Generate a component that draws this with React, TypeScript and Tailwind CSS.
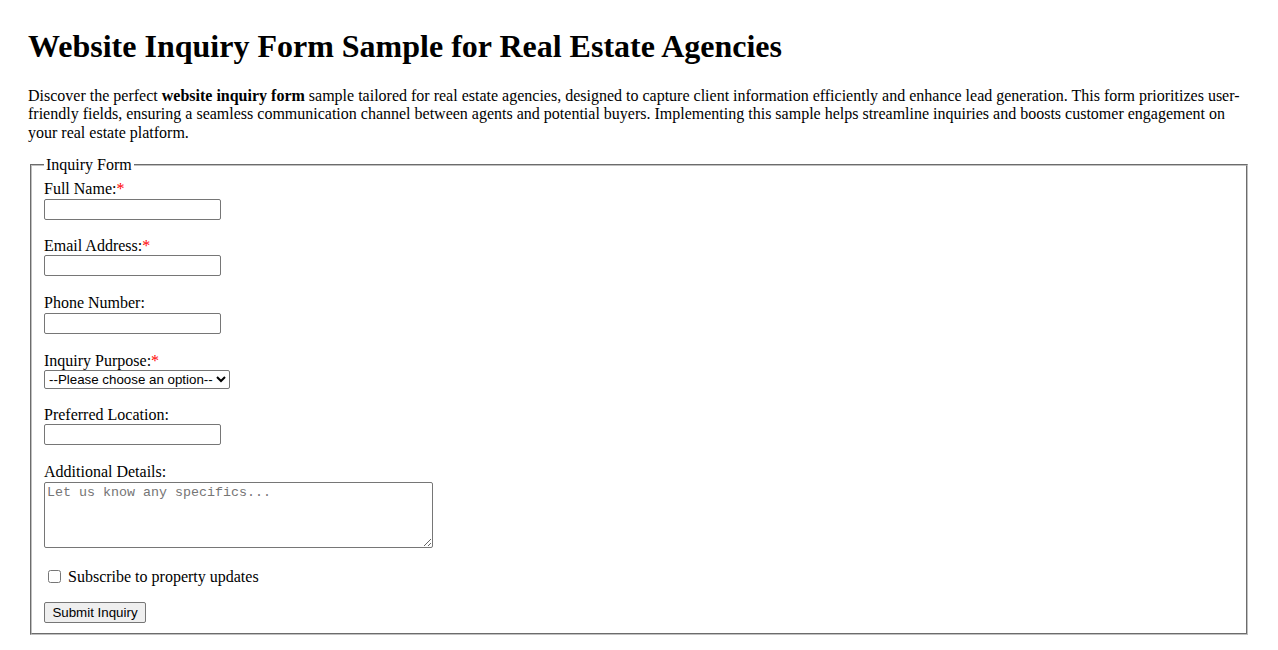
import { useState } from 'react';

const inputCls =
  "block w-[177px] h-[21px] border border-[#767676] rounded-[2px] bg-white px-[2px] font-['Liberation_Sans',Arial,sans-serif] text-[13.33px] leading-none";

function Req() {
  return <span className="text-[#ff0000]">*</span>;
}

export default function App() {
  const [subscribe, setSubscribe] = useState(false);

  return (
    <div className="min-h-[650px] bg-white text-black font-['Liberation_Serif','Times_New_Roman',serif] leading-[1.15] px-[28px] pt-[28px]">
      <h1 className="text-[32px] font-bold leading-[1.15]">Website Inquiry Form Sample for Real Estate Agencies</h1>

      <p className="mt-[22px] mb-[14px] text-[16px]">
        Discover the perfect <strong className="font-bold">website inquiry form</strong> sample tailored for real estate agencies,
        designed to capture client information efficiently and enhance lead generation. This form prioritizes user-friendly fields,
        ensuring a seamless communication channel between agents and potential buyers. Implementing this sample helps streamline
        inquiries and boosts customer engagement on your real estate platform.
      </p>

      <form onSubmit={(e) => e.preventDefault()}>
        <fieldset className="mx-[2px] border-2 [border-style:groove] border-[#c0c0c0] px-[12px] pt-[6px] pb-[10px] text-[16px]">
          <legend className="px-[2px]">Inquiry Form</legend>

          <label htmlFor="fullName" className="block">
            Full Name:<Req />
          </label>
          <input id="fullName" type="text" className={inputCls + ' mb-[17px]'} />

          <label htmlFor="email" className="block">
            Email Address:<Req />
          </label>
          <input id="email" type="email" className={inputCls + ' mb-[18px]'} />

          <label htmlFor="phone" className="block">
            Phone Number:
          </label>
          <input id="phone" type="tel" className={inputCls + ' mb-[18px]'} />

          <label htmlFor="purpose" className="block">
            Inquiry Purpose:<Req />
          </label>
          <select
            id="purpose"
            defaultValue=""
            className="block h-[19px] w-[186px] mb-[17px] border border-[#767676] rounded-[2px] bg-white font-['Liberation_Sans',Arial,sans-serif] text-[13.33px] leading-none"
          >
            <option value="">--Please choose an option--</option>
            <option value="buy">Buying a property</option>
            <option value="sell">Selling a property</option>
            <option value="rent">Renting</option>
            <option value="other">Other</option>
          </select>

          <label htmlFor="location" className="block">
            Preferred Location:
          </label>
          <input id="location" type="text" className={inputCls + ' mb-[18px]'} />

          <label htmlFor="details" className="block">
            Additional Details:
          </label>
          <textarea
            id="details"
            placeholder="Let us know any specifics..."
            className="block w-[389px] h-[66px] border border-[#767676] rounded-[2px] bg-white px-[2px] py-[2px] font-['Liberation_Mono','Courier_New',monospace] text-[13.33px] leading-[1.15] placeholder:text-[#757575]"
          />

          <div className="flex items-center mt-[20px] mb-[16px]">
            <input
              type="checkbox"
              checked={subscribe}
              onChange={(e) => setSubscribe(e.target.checked)}
              className="w-[13px] h-[13px] ml-[4px] mr-[7px]"
            />
            <span>Subscribe to property updates</span>
          </div>

          <button
            type="submit"
            className="block h-[21px] w-[102px] border border-[#767676] rounded-[2px] bg-[#efefef] font-['Liberation_Sans',Arial,sans-serif] text-[13.33px] leading-none"
          >
            Submit Inquiry
          </button>
        </fieldset>
      </form>
    </div>
  );
}
